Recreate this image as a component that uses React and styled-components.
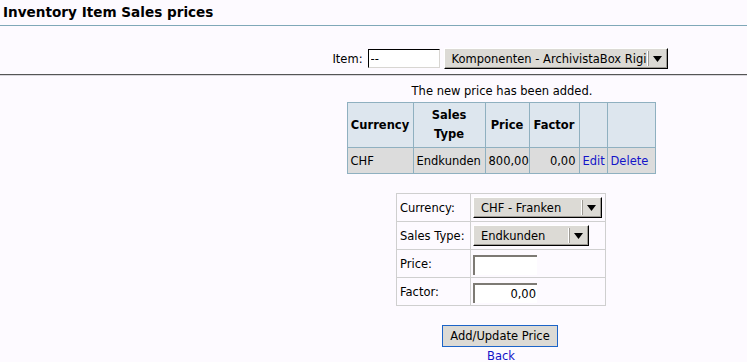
import React from "react";
import styled, { createGlobalStyle } from "styled-components";

const GlobalStyle = createGlobalStyle`
  html, body {
    margin: 0;
    padding: 0;
    background: #fdfaff;
    font-family: "DejaVu Sans", "Liberation Sans", sans-serif;
    font-size: 11.5px;
    color: #000;
  }
`;

function Select({ value, width }) {
  return (
    <SelectBox $width={width}>
      <SelectText>{value}</SelectText>
      <ArrowBox>
        <svg width="9" height="6" viewBox="0 0 9 6">
          <path d="M0 0 L9 0 L4.5 6 Z" fill="#000" />
        </svg>
      </ArrowBox>
    </SelectBox>
  );
}

function App() {
  const prices = [
    { currency: "CHF", type: "Endkunden", price: "800,00", factor: "0,00" },
  ];

  return (
    <Page>
      <GlobalStyle />
      <Header>
        <Title>Inventory Item Sales prices</Title>
      </Header>
      <Columns>
        <Spacer />
        <Main>
          <ItemRow>
            <Label>Item:</Label>
            <TextInput $width={72} value="--" readOnly />
            <Select value="Komponenten - ArchivistaBox Rigi" width={224} />
          </ItemRow>
        </Main>
      </Columns>
      <Rule />
      <Columns>
        <Spacer />
        <Main>
          <Message>The new price has been added.</Message>
          <PriceTable>
            <colgroup>
              <col style={{ width: 66 }} />
              <col style={{ width: 72 }} />
              <col style={{ width: 44 }} />
              <col style={{ width: 50 }} />
              <col style={{ width: 28 }} />
              <col style={{ width: 48 }} />
            </colgroup>
            <thead>
              <tr>
                <Th>Currency</Th>
                <Th>
                  Sales
                  <br />
                  Type
                </Th>
                <Th>Price</Th>
                <Th>Factor</Th>
                <Th />
                <Th />
              </tr>
            </thead>
            <tbody>
              {prices.map((p) => (
                <tr key={p.currency + p.type}>
                  <Td>{p.currency}</Td>
                  <Td>{p.type}</Td>
                  <Td $right>{p.price}</Td>
                  <Td $right>{p.factor}</Td>
                  <Td>
                    <Link href="#">Edit</Link>
                  </Td>
                  <Td>
                    <Link href="#">Delete</Link>
                  </Td>
                </tr>
              ))}
            </tbody>
          </PriceTable>

          <FormTable>
            <colgroup>
              <col style={{ width: 74 }} />
              <col style={{ width: 135 }} />
            </colgroup>
            <tbody>
              <tr>
                <FormLabel>Currency:</FormLabel>
                <FormCell>
                  <Select value="CHF - Franken" width={129} />
                </FormCell>
              </tr>
              <tr>
                <FormLabel>Sales Type:</FormLabel>
                <FormCell>
                  <Select value="Endkunden" width={116} />
                </FormCell>
              </tr>
              <tr>
                <FormLabel>Price:</FormLabel>
                <FormCell>
                  <PriceInput value="" readOnly />
                </FormCell>
              </tr>
              <tr>
                <FormLabel>Factor:</FormLabel>
                <FormCell>
                  <PriceInput value="0,00" readOnly />
                </FormCell>
              </tr>
            </tbody>
          </FormTable>

          <SubmitButton type="button">Add/Update Price</SubmitButton>
          <Link href="#">Back</Link>
        </Main>
      </Columns>
    </Page>
  );
}

export default App;

const Page = styled.div`
  width: 747px;
  min-height: 362px;
`;

const Header = styled.div`
  padding: 4px 0 0 3px;
  height: 21px;
  border-bottom: 1px solid #7fa8b8;
`;

const Title = styled.h1`
  margin: 0;
  font-size: 13.6px;
  font-weight: bold;
  line-height: 16px;
`;

const Columns = styled.div`
  display: flex;
`;

const Spacer = styled.div`
  width: 255px;
  flex: none;
`;

const Main = styled.div`
  flex: 1;
  display: flex;
  flex-direction: column;
  align-items: center;
`;

const ItemRow = styled.div`
  display: flex;
  align-items: center;
  gap: 4px;
  margin-top: 22px;
  height: 21px;
  margin-left: -2px;
`;

const Label = styled.span`
  margin-right: 1px;
`;

const TextInput = styled.input`
  box-sizing: border-box;
  width: ${(p) => p.$width}px;
  height: 19px;
  padding: 0 2px;
  font: inherit;
  background: #fff;
  border: 1px solid #d8d6d2;
  border-top-color: #000;
  border-left-color: #000;
  outline: none;
`;

const SelectBox = styled.div`
  box-sizing: border-box;
  width: ${(p) => p.$width}px;
  height: 21px;
  display: flex;
  align-items: center;
  background: #dcdad5;
  border: 1px solid #fff;
  border-right-color: #000;
  border-bottom-color: #000;
  box-shadow: inset -1px -1px 0 #9d9a94;
`;

const SelectText = styled.span`
  flex: 1;
  padding-left: 7px;
  white-space: nowrap;
  overflow: hidden;
`;

const ArrowBox = styled.span`
  width: 17px;
  height: 15px;
  display: flex;
  align-items: center;
  justify-content: center;
  border-left: 1px solid #9d9a94;
  box-shadow: -1px 0 0 #fff;
  margin-right: 1px;
`;

const Rule = styled.div`
  margin-top: 5px;
  height: 1px;
  background: #555;
  border-bottom: 1px solid #d8d6dc;
`;

const Message = styled.div`
  margin-top: 7px;
  line-height: 16px;
  margin-left: 2px;
`;

const PriceTable = styled.table`
  border-collapse: collapse;
  table-layout: fixed;
  width: 308px;
  margin-top: 3px;
`;

const Th = styled.th`
  background: #dde6ee;
  border: 1px solid #8fb0c0;
  height: 44px;
  padding: 0 2px;
  font-weight: bold;
  line-height: 19px;
  text-align: center;
`;

const Td = styled.td`
  background: #dcdcdc;
  border: 1px solid #8fb0c0;
  height: 25px;
  padding: 0 3px;
  white-space: nowrap;
  text-align: ${(p) => (p.$right ? "right" : "left")};
`;

const Link = styled.a`
  color: #1414c8;
  text-decoration: none;
  line-height: 14px;
`;

const FormTable = styled.table`
  border-collapse: collapse;
  table-layout: fixed;
  width: 209px;
  margin-top: 19px;
`;

const FormLabel = styled.td`
  border: 1px solid #cfcfcf;
  height: 27px;
  padding: 0 3px;
  white-space: nowrap;
`;

const FormCell = styled.td`
  border: 1px solid #cfcfcf;
  height: 27px;
  padding: 0 2px;
`;

const PriceInput = styled.input`
  box-sizing: border-box;
  width: 64px;
  height: 20px;
  padding: 0 1px 0 2px;
  text-align: right;
  font: inherit;
  background: #fff;
  border: none;
  border-top: 2px solid #7d7a74;
  border-left: 2px solid #7d7a74;
  outline: none;
  margin-top: 2px;
`;

const SubmitButton = styled.button`
  margin-top: 19px;
  box-sizing: border-box;
  width: 116px;
  height: 22px;
  background: #dcdad5;
  border: 1px solid #1c64c8;
  font: inherit;
  color: #000;
  padding: 0;
  margin-left: -2px;
  margin-bottom: 2px;
`;
